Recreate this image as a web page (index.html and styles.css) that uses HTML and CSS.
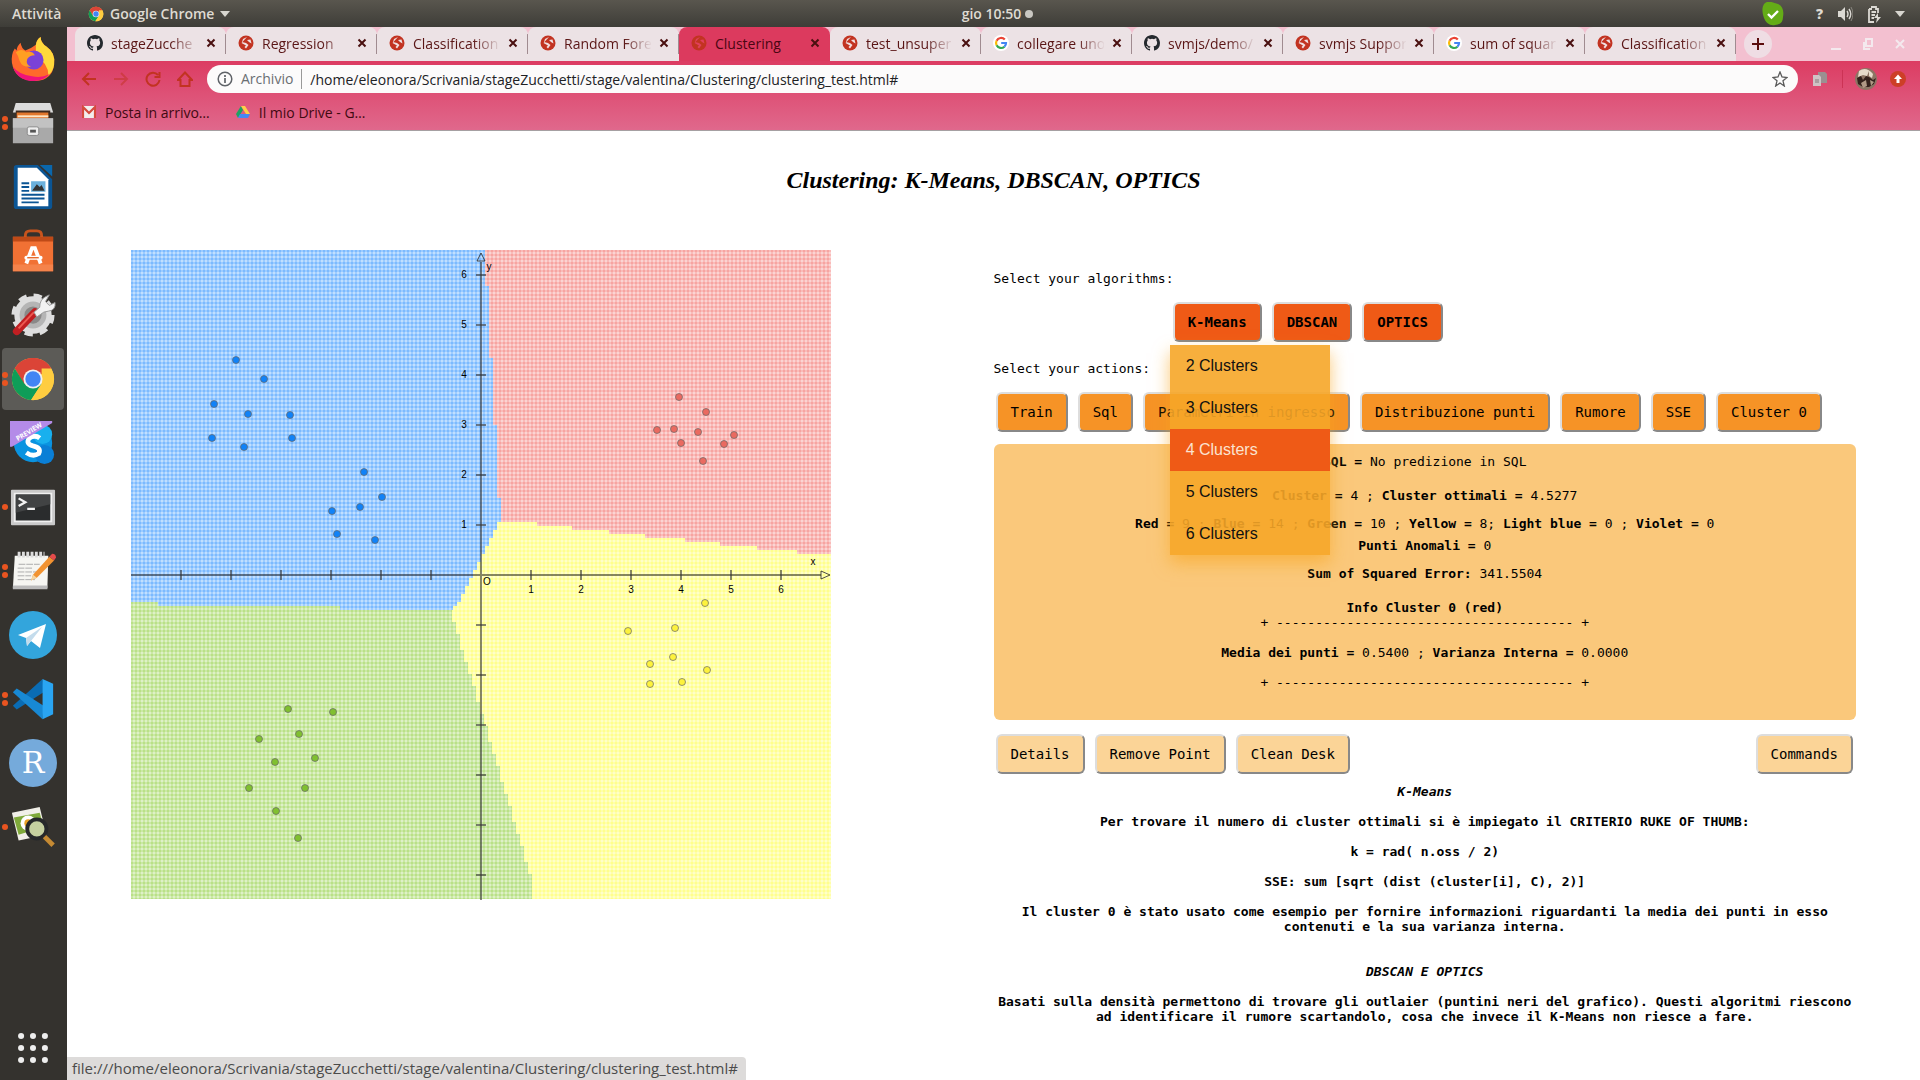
FILE: index.html
```html
<!DOCTYPE html>
<html lang="it">
<head>
<meta charset="utf-8">
<title>Clustering</title>
<link rel="stylesheet" href="styles.css">
</head>
<body>
<svg class="defs" aria-hidden="true">
  <symbol id="chrome" viewBox="0 0 48 48">
    <circle cx="24" cy="24" r="22" fill="#fc4"/>
    <path d="M24 24 5 13a22 22 0 0 1 38 0z" fill="#db4437"/>
    <path d="M24 13h19A22 22 0 0 0 5 13l10 17z" fill="#db4437"/>
    <path d="M5 13a22 22 0 0 0 17 33l11-17-18 0z" fill="#0f9d58"/>
    <path d="M43 13a22 22 0 0 1-21 33l11-17V13z" fill="#ffcd40"/>
    <circle cx="24" cy="24" r="10" fill="#f1f1f1"/><circle cx="24" cy="24" r="8" fill="#4285f4"/>
  </symbol>
  <symbol id="globe" viewBox="0 0 16 16">
    <circle cx="8" cy="8" r="7.5" fill="#c23321"/>
    <path d="M9 2 5 4 4 7l4 1 2.500 2L8 13.500 6.500 12 8 10.500 3.500 8M9 5l3.500-.5 1 4L11 7z" fill="currentColor"/>
  </symbol>
  <symbol id="github" viewBox="0 0 16 16">
    <path fill="#24292e" d="M8 0C3.580 0 0 3.580 0 8c0 3.540 2.290 6.530 5.470 7.590.4.070.55-.17.55-.38v-1.490c-2.010.37-2.530-.49-2.690-.94-.09-.23-.48-.94-.82-1.130-.28-.15-.68-.52-.01-.53.63-.01 1.080.58 1.230.82.72 1.210 1.870.87 2.330.66.07-.52.28-.87.51-1.070-1.780-.2-3.640-.89-3.640-3.950 0-.87.31-1.590.82-2.150-.08-.2-.36-1.020.08-2.120 0 0 .67-.21 2.200.82a7.600 7.600 0 0 1 4 0c1.530-1.040 2.200-.82 2.200-.82.44 1.100.16 1.920.08 2.120.51.56.82 1.270.82 2.150 0 3.070-1.870 3.750-3.650 3.950.29.25.54.73.54 1.480v2.200c0 .21.15.46.55.38A8 8 0 0 0 16 8c0-4.420-3.580-8-8-8z"/>
  </symbol>
  <symbol id="google" viewBox="0 0 16 16">
    <circle cx="8" cy="8" r="8" fill="#fff"/>
    <g fill="none" stroke-width="2.200"><path d="M11.800 4.600A5 5 0 0 0 3.600 5.700" stroke="#ea4335"/><path d="M3.600 5.700a5 5 0 0 0 0 4.600" stroke="#fbbc05"/><path d="M3.600 10.300a5 5 0 0 0 7.800 1.400" stroke="#34a853"/><path d="M11.400 11.700A5 5 0 0 0 13 8H8.200" stroke="#4285f4"/></g>
  </symbol>
  <symbol id="cross" viewBox="0 0 10 10"><path d="m1.500 1.500 7 7m0-7-7 7" stroke="currentColor" stroke-width="2"/></symbol>
</svg>

<header class="topbar">
  <span class="activities">Attività</span>
  <span class="appmenu"><svg class="i16"><use href="#chrome"/></svg>Google Chrome<svg width="10" height="6"><path d="M0 0h10L5 6z" fill="#d8d6d0"/></svg></span>
  <span class="clock">gio 10:50 <i class="notice"></i></span>
  <span class="tray">
    <svg width="22" height="24" viewBox="0 0 22 24"><path d="M5 0c4-1 7 1 11 2 5 2 6 8 5 13 0 5-3 8-8 8-5 1-9-2-11-7C0 11-1 2 5 0z" fill="#64ac17"/><path d="m6 12 3.500 3.500L16 9" fill="none" stroke="#fff" stroke-width="2.400"/></svg>
    <b class="help">?</b>
    <svg width="16" height="16" viewBox="0 0 16 16"><path d="M1 5h3l4-4v14l-4-4H1z" fill="#dbd9d3"/><path d="M10 5q2 3 0 6m2-8q3.500 5 0 10" fill="none" stroke="#dbd9d3" stroke-width="1.400"/><path d="M14 1q4 7 0 14" fill="none" stroke="#88867f"/></svg>
    <svg width="14" height="18" viewBox="0 0 14 18"><path d="M4 2h5v2h2v4M2 4v13h5M2 4h3M4.500 7H9M4.500 10H8M4.500 13H7" fill="none" stroke="#dbd9d3" stroke-width="1.800"/><path d="M11 8 7 13h3l-1 5 5-6h-3z" fill="#dbd9d3"/></svg>
    <svg width="10" height="6"><path d="M0 0h10L5 6z" fill="#d8d6d0"/></svg>
  </span>
</header>

<div class="desktop">
<nav class="dock" aria-label="Dock">
  <div class="app"><svg viewBox="0 0 48 48"><path d="M27 9q1-6 5-8 0 6 6 10 10 7 8 19-2 16-19 17Q5 47 2 28q-1-9 3-15l2 2q0-4 4-8 1 6 5 8 6-2 11-6z" fill="#ff6a2b"/><path d="M27 9q1-6 5-8 0 6 6 10 10 7 8 19-1 7-6 11 0-13-13-20z" fill="#ffd93b"/><path d="M3 32q5 15 22 15 10 0 16-7-8 4-18 2Q9 40 3 32z" fill="#f0147a"/><circle cx="25" cy="25" r="10" fill="#7a42d8"/><path d="M6 17q6-5 11 0 6-2 9 3-6 0-8 4-2 6 4 8-9 1-12-6-1-5-4-9z" fill="#ff9f22"/></svg></div>
  <div class="app run2"><svg viewBox="0 0 48 48"><path d="M6 3h36l3 10H3z" fill="#dcdcdc"/><path d="M6 11h36v11H6z" fill="#3c2a1e"/><path d="M7 13h33v8H7z" fill="#e2772c"/><path d="M8 16h32v2H8z" fill="#ffe6c4"/><path d="M3 19h42v26H3z" fill="#a9a9a9"/><path d="M3 19h42v10H3z" fill="#c2c2c2"/><rect x="18" y="28" width="12" height="9" rx="2" fill="#eee" stroke="#888"/><path d="M21 31h6v3h-6z" fill="#555"/></svg></div>
  <div class="app"><svg viewBox="0 0 48 48"><path d="M7 1h22l15 15v28q0 3-3 3H7q-3 0-3-3V4q0-3 3-3z" fill="#0b5594"/><path d="M31 1h13v12z" fill="#0a67ac"/><path d="M8 4h20l12 12v28H8z" fill="#fff"/><path d="M12 20h8M12 24h8M12 28h8M12 32h24M12 36h24M12 40h18" stroke="#0b5594" stroke-width="2"/><path d="M22 18h15v11H22z" fill="#6bb1dd"/><path d="m23 28 5-7 3 3 2-2 3 6z" fill="#333"/></svg></div>
  <div class="app"><svg viewBox="0 0 48 48"><path d="M16 13V8q0-5 5-5h7q5 0 5 5v5" fill="none" stroke="#c8541d" stroke-width="3"/><path d="M3 9h42v36H3z" fill="#f17134"/><path d="M3 9h42v5H3z" fill="#bf4a17"/><path d="M3 38h42v7H3z" fill="#f5834b"/><path d="m17 37 6-16h3l6 16" fill="none" stroke="#fff" stroke-width="4"/><path d="M17 31h15" stroke="#fff" stroke-width="4" stroke-linecap="round"/><path d="M18 31h12" stroke="#e86b2e" stroke-width="1.500"/></svg></div>
  <div class="app"><svg viewBox="0 0 48 48"><circle cx="24" cy="24" r="15" fill="none" stroke="#dedede" stroke-width="9"/><circle cx="24" cy="24" r="20" fill="none" stroke="#dedede" stroke-width="5" stroke-dasharray="8.500 7.208"/><circle cx="24" cy="24" r="14" fill="#b5b5b5"/><circle cx="24" cy="24" r="9" fill="#8a8988"/><path d="M7 41 26 21" stroke="#c01f22" stroke-width="8" stroke-linecap="round"/><path d="m9 38 16-17" stroke="#ee5a52" stroke-width="2"/><path d="m25 21 6-5q0-8 6-11l4-2-4 7 4 4 6-3q1 8-7 9-5 0-9 4l-3 2z" fill="#f2f2f2" stroke="#999"/></svg></div>
  <div class="app run2 current"><svg viewBox="0 0 48 48"><use href="#chrome"/></svg></div>
  <div class="app"><svg viewBox="0 0 48 48"><circle cx="24" cy="24" r="20" fill="#0a93e0"/><circle cx="36" cy="36" r="10" fill="#0a7fd6"/><circle cx="34" cy="15" r="10" fill="#18b0ee"/><path d="M31 19q-5-4-11 0-4 6 4 8 9 2 6 8-6 4-13-1" fill="none" stroke="#fff" stroke-width="5"/><path d="M0 1h44v2L2 28H0z" fill="#b48be8"/><text x="8" y="22" transform="rotate(-31 8 22)" class="preview">PREVIEW</text></svg></div>
  <div class="app run1"><svg viewBox="0 0 48 48"><rect x="1" y="6" width="46" height="37" rx="1" fill="#c9c9c9"/><path d="M4 9h40v31H4z" fill="#f0f0f0"/><path d="M6 11h36v27H6z" fill="#2a2c2d"/><path d="M6 11h36v10L6 30z" fill="#414344"/><path d="m9 15 7 4-7 4M18 26h8" fill="none" stroke="#f2f2f2" stroke-width="2.400"/></svg></div>
  <div class="app run2"><svg viewBox="0 0 48 48"><path d="M5 8h35l-1 34H3z" fill="#f6f6f2"/><path d="M3 39h36v4H3z" fill="#bbb"/><path d="M8 7h28" stroke="#ddd" stroke-width="6" stroke-dasharray="3 1.500"/><path d="M9 17h22M8 21h16M8 25h24M8 29h14M8 33h18" stroke="#aaa" stroke-dasharray="7 1"/><path d="m22 34 2-6L41 9l5 4-18 18z" fill="#f29331"/><path d="m41 9 3-3q4 0 4 4l-2 3z" fill="#e44b4b"/><path d="m22 34 2-6 4 3z" fill="#f5d7a4"/></svg></div>
  <div class="app big"><svg viewBox="0 0 48 48"><circle cx="24" cy="24" r="24" fill="#33a5dc"/><path d="m9 24 28-11-6 24-9-7-4 5-1-8z" fill="#fff"/><path d="m17 27 16-11-11 14-4 5z" fill="#c4dcec"/></svg></div>
  <div class="app run2"><svg viewBox="0 0 48 48"><path d="M34 3 3 31l4 4 28-18z" fill="#0a6cb4"/><path d="M34 45 3 17l4-4 28 18z" fill="#1889d4"/><path d="m34 3 11 5v32l-11 5z" fill="#2aa5f2"/></svg></div>
  <div class="app big"><svg viewBox="0 0 48 48"><circle cx="24" cy="24" r="24" fill="#75aadb"/><text x="24" y="34" text-anchor="middle" class="rletter">R</text></svg></div>
  <div class="app run1"><svg viewBox="0 0 48 48"><path d="m2 9 29-6 7 29-29 6z" fill="#f1efe8"/><path d="m4 14 27-5 4 15-26 8z" fill="#7fa93a"/><circle cx="19" cy="20" r="8" fill="#fff"/><circle cx="19" cy="20" r="4" fill="#e9a227"/><circle cx="28" cy="26" r="10" fill="#c5d0a0" stroke="#26282a" stroke-width="4"/><path d="m36 34 9 9" stroke="#c58a33" stroke-width="5"/></svg></div>
  <div class="app grid"><svg viewBox="0 0 48 48" fill="#eee"><circle cx="11" cy="11" r="3.300"/><circle cx="24" cy="11" r="3.300"/><circle cx="37" cy="11" r="3.300"/><circle cx="11" cy="24" r="3.300"/><circle cx="24" cy="24" r="3.300"/><circle cx="37" cy="24" r="3.300"/><circle cx="11" cy="37" r="3.300"/><circle cx="24" cy="37" r="3.300"/><circle cx="37" cy="37" r="3.300"/></svg></div>
</nav>

<div class="browser">
  <div class="tabs">
    <div class="tab"><svg class="i16"><use href="#github"/></svg><span>stageZucche</span><button aria-label="Chiudi"><svg><use href="#cross"/></svg></button></div>
    <div class="tab"><svg class="i16"><use href="#globe"/></svg><span>Regression</span><button aria-label="Chiudi"><svg><use href="#cross"/></svg></button></div>
    <div class="tab"><svg class="i16"><use href="#globe"/></svg><span>Classification</span><button aria-label="Chiudi"><svg><use href="#cross"/></svg></button></div>
    <div class="tab"><svg class="i16"><use href="#globe"/></svg><span>Random Fore</span><button aria-label="Chiudi"><svg><use href="#cross"/></svg></button></div>
    <div class="tab active"><svg class="i16"><use href="#globe"/></svg><span>Clustering</span><button aria-label="Chiudi"><svg><use href="#cross"/></svg></button></div>
    <div class="tab"><svg class="i16"><use href="#globe"/></svg><span>test_unsuper</span><button aria-label="Chiudi"><svg><use href="#cross"/></svg></button></div>
    <div class="tab"><svg class="i16"><use href="#google"/></svg><span>collegare uno</span><button aria-label="Chiudi"><svg><use href="#cross"/></svg></button></div>
    <div class="tab"><svg class="i16"><use href="#github"/></svg><span>svmjs/demo/</span><button aria-label="Chiudi"><svg><use href="#cross"/></svg></button></div>
    <div class="tab"><svg class="i16"><use href="#globe"/></svg><span>svmjs Suppor</span><button aria-label="Chiudi"><svg><use href="#cross"/></svg></button></div>
    <div class="tab"><svg class="i16"><use href="#google"/></svg><span>sum of squar</span><button aria-label="Chiudi"><svg><use href="#cross"/></svg></button></div>
    <div class="tab"><svg class="i16"><use href="#globe"/></svg><span>Classification</span><button aria-label="Chiudi"><svg><use href="#cross"/></svg></button></div>
    <button class="newtab" aria-label="Nuova scheda"><svg width="12" height="12"><path d="M6 0v12M0 6h12" stroke="#5a0d0d" stroke-width="2"/></svg></button>
    <div class="winctl">
      <svg width="10" height="12"><path d="M0 11h10" stroke="#f4e9ee" stroke-width="2"/></svg>
      <svg width="10" height="12"><path d="M3 1h6v7H3zM1 4v7h6" fill="none" stroke="#f4e9ee" stroke-width="2"/></svg>
      <svg width="10" height="12"><path d="m1 2 8 8m0-8-8 8" stroke="#f4e9ee" stroke-width="2"/></svg>
    </div>
  </div>
  <div class="chromebar">
    <div class="toolbar">
      <button aria-label="Indietro"><svg viewBox="0 0 16 16"><path d="M15 8H2m6-6L2 8l6 6"/></svg></button>
      <button aria-label="Avanti" class="off"><svg viewBox="0 0 16 16"><path d="M1 8h13M8 2l6 6-6 6"/></svg></button>
      <button aria-label="Ricarica"><svg viewBox="0 0 16 16"><path d="M13 4a6.500 6.500 0 1 0 1.500 5M14.500 1v5h-5"/></svg></button>
      <button aria-label="Home"><svg viewBox="0 0 16 16"><path d="M1 9 8 1.500 15 9h-2.500v6h-9V9z"/></svg></button>
      <div class="omnibox">
        <svg class="i16" viewBox="0 0 16 16"><circle cx="8" cy="8" r="6.800" fill="none" stroke="#5f6368" stroke-width="1.500"/><path d="M8 7v5M8 4v2" stroke="#5f6368" stroke-width="1.700"/></svg>
        <label for="url">Archivio</label>
        <input id="url" type="text" value="/home/eleonora/Scrivania/stageZucchetti/stage/valentina/Clustering/clustering_test.html#">
        <svg class="i16" viewBox="0 0 16 16"><path d="m8 1 2 5 5 .5-4 3.300L12.300 15 8 12l-4.300 3L5 9.800 1 6.500 6 6z" fill="none" stroke="#5a5a5a" stroke-width="1.300"/></svg>
      </div>
      <svg class="ext" viewBox="0 0 16 16"><path d="M6 1h7l2 2v9H6z" fill="#9b8f91"/><path d="M1 4h6l2 2v9H1z" fill="#cfc3c5"/><path d="M3 8h4v4H3z" fill="#aa9ea0"/></svg>
      <span class="sep"></span>
      <svg class="avatar" viewBox="0 0 22 22"><circle cx="11" cy="11" r="11" fill="#8c7564"/><path d="M4 3q7-5 14 3l-1 4-3-2V3l-2 5-4-1-5 2z" fill="#e6dccb"/><path d="M2 10l4-2 2 4 3-4 3 1 4 3 3-2-2 6-5 3-6 0-5-3z" fill="#33221c"/><path d="M6 15l5-3 1 6-4 2zM15 12l4 2-3 4z" fill="#b09a86"/></svg>
      <svg class="update" viewBox="0 0 16 16"><circle cx="8" cy="8" r="8" fill="#cd3f27"/><path d="M8 3.500 12 8H9.500v4h-3V8H4z" fill="#fff"/></svg>
    </div>
    <div class="bookmarks">
      <a href="#"><svg viewBox="0 0 14 14"><path d="M0 1h14v12H0z" fill="#f3eeee"/><path d="M1 13V2l6 6 6-6v11" fill="none" stroke="#d54a3d" stroke-width="2.200"/></svg>Posta in arrivo…</a>
      <a href="#"><svg viewBox="0 0 14 14"><path d="M5 1 0 9l2 4 5-8z" fill="#1da362"/><path d="M5 1h4l5 8h-4z" fill="#ffcf48"/><path d="m4 9-2 4h10l2-4z" fill="#4688f4"/></svg>Il mio Drive - G…</a>
    </div>
  </div>

  <main class="page">
    <h1>Clustering: K-Means, DBSCAN, OPTICS</h1>
    <div class="columns">
      <section class="plot">
        <svg class="chart" width="700" height="650" viewBox="0 0 700 650" role="img" aria-label="Cluster">
          <defs>
            <pattern id="weave" width="4" height="4" patternUnits="userSpaceOnUse">
              <path d="M0 0h2v2H0z" fill="#fff" fill-opacity=".45"/><path d="M2 0h2v2H2zM0 2h2v2H0z" fill="#fff" fill-opacity=".59"/><path d="M2 2h2v2H2z" fill="#fff" fill-opacity=".74"/>
            </pattern>
            <clipPath id="area"><path d="M0 0h700v649H0z"/></clipPath>
          </defs>
          <g shape-rendering="crispEdges" clip-path="url(#area)">
            <path d="M0 0h700v650H0z" fill="#ffff30"/>
            <path d="M354 0H700V304H666V300H626V296H589V292H554V288H514V284H478V280H441V276H406V272H370V248H366V175H362V108H358V36H354z" fill="#f05a54"/>
            <path d="M0 0H354V36H358V108H362V175H366V248H370V272h-4v8h-4v8h-4v8h-4v8h-4v8h-4v8h-4v8h-4v8h-4v8h-4v8h-4v4h-4v4H209V356H27V352H0z" fill="#1082ff"/>
            <path d="M0 352H27V356H209V360H321v12h4v12h4v16h4v12h4v12h4v12h4v16h4v12h4v12h4v16h4v12h4v12h4v16h4v12h4v12h4v16h4v12h4v12h4v16h4v12h4v32h-405z" fill="#80c825"/>
            <path d="M0 0h700v650H0z" fill="url(#weave)"/>
          </g>
          <g class="axes">
            <path d="M0 325h690M350 12v638"/>
            <path d="M50 320v10M100 320v10M150 320v10M200 320v10M250 320v10M300 320v10M400 320v10M450 320v10M500 320v10M550 320v10M600 320v10M650 320v10"/>
            <path d="M345 25h10M345 75h10M345 125h10M345 175h10M345 225h10M345 275h10M345 375h10M345 425h10M345 475h10M345 525h10M345 575h10M345 625h10"/>
            <path class="tip" d="m346 11 4-8 4 8zM690 321l9 4-9 4z"/>
          </g>
          <g class="labels">
            <text x="333" y="28">6</text><text x="333" y="78">5</text><text x="333" y="128">4</text><text x="333" y="178">3</text><text x="333" y="228">2</text><text x="333" y="278">1</text>
            <text x="400" y="343">1</text><text x="450" y="343">2</text><text x="500" y="343">3</text><text x="550" y="343">4</text><text x="600" y="343">5</text><text x="650" y="343">6</text>
            <text x="358" y="20">y</text><text x="682" y="315">x</text><text x="356" y="335">O</text>
          </g>
          <g class="dots" fill="#1082f8"><circle cx="105" cy="110" r="3.500"/><circle cx="133" cy="129" r="3.500"/><circle cx="83" cy="154" r="3.500"/><circle cx="117" cy="164" r="3.500"/><circle cx="159" cy="165" r="3.500"/><circle cx="81" cy="188" r="3.500"/><circle cx="161" cy="188" r="3.500"/><circle cx="113" cy="197" r="3.500"/><circle cx="233" cy="222" r="3.500"/><circle cx="251" cy="247" r="3.500"/><circle cx="229" cy="257" r="3.500"/><circle cx="201" cy="261" r="3.500"/><circle cx="206" cy="284" r="3.500"/><circle cx="244" cy="290" r="3.500"/></g>
          <g class="dots" fill="#ea6a60"><circle cx="548" cy="147" r="3.500"/><circle cx="575" cy="162" r="3.500"/><circle cx="543" cy="179" r="3.500"/><circle cx="526" cy="180" r="3.500"/><circle cx="567" cy="182" r="3.500"/><circle cx="550" cy="193" r="3.500"/><circle cx="603" cy="185" r="3.500"/><circle cx="593" cy="194" r="3.500"/><circle cx="572" cy="211" r="3.500"/></g>
          <g class="dots" fill="#fdf23c"><circle cx="574" cy="353" r="3.500"/><circle cx="497" cy="381" r="3.500"/><circle cx="544" cy="378" r="3.500"/><circle cx="542" cy="407" r="3.500"/><circle cx="519" cy="414" r="3.500"/><circle cx="576" cy="420" r="3.500"/><circle cx="519" cy="434" r="3.500"/><circle cx="551" cy="432" r="3.500"/></g>
          <g class="dots" fill="#80c030"><circle cx="157" cy="459" r="3.500"/><circle cx="202" cy="462" r="3.500"/><circle cx="168" cy="484" r="3.500"/><circle cx="128" cy="489" r="3.500"/><circle cx="144" cy="512" r="3.500"/><circle cx="184" cy="508" r="3.500"/><circle cx="118" cy="538" r="3.500"/><circle cx="174" cy="538" r="3.500"/><circle cx="145" cy="561" r="3.500"/><circle cx="167" cy="588" r="3.500"/></g>
        </svg>
      </section>

      <section class="controls">
        <p class="hint">Select your algorithms:</p>
        <div class="row algorithms">
          <div class="dropdown">
            <button class="btn strong">K-Means</button>
            <div class="menu">
              <a href="#">2 Clusters</a><a href="#">3 Clusters</a><a href="#" class="selected">4 Clusters</a><a href="#">5 Clusters</a><a href="#">6 Clusters</a>
            </div>
          </div>
          <button class="btn strong">DBSCAN</button>
          <button class="btn strong">OPTICS</button>
        </div>
        <p class="hint second">Select your actions:</p>
        <div class="row">
          <button class="btn mid">Train</button>
          <button class="btn mid">Sql</button>
          <button class="btn mid">Parametri in ingresso</button>
          <button class="btn mid">Distribuzione punti</button>
          <button class="btn mid">Rumore</button>
          <button class="btn mid">SSE</button>
          <button class="btn mid">Cluster 0</button>
        </div>
        <div class="info">
          <p><b>SQL =</b> No predizione in SQL</p>
          <p class="gap-l"><b>Cluster =</b> 4 ; <b>Cluster ottimali =</b> 4.5277</p>
          <p class="gap-m"><b>Red =</b> 9 ; <b>Blue =</b> 14 ; <b>Green =</b> 10 ; <b>Yellow =</b> 8; <b>Light blue =</b> 0 ; <b>Violet =</b> 0</p>
          <p class="gap-s"><b>Punti Anomali =</b> 0</p>
          <p class="gap-m"><b>Sum of Squared Error:</b> 341.5504</p>
          <p class="gap-l"><b>Info Cluster 0 (red)</b></p>
          <p>+ -------------------------------------- +</p>
          <p class="gap-line"><b>Media dei punti =</b> 0.5400 ; <b>Varianza Interna =</b> 0.0000</p>
          <p class="gap-line">+ -------------------------------------- +</p>
        </div>
        <div class="row tools">
          <button class="btn soft">Details</button>
          <button class="btn soft">Remove Point</button>
          <button class="btn soft">Clean Desk</button>
          <button class="btn soft last">Commands</button>
        </div>
        <div class="notes">
          <h2>K-Means</h2>
          <p>Per trovare il numero di cluster ottimali si è impiegato il CRITERIO RUKE OF THUMB:</p>
          <p>k = rad( n.oss / 2)</p>
          <p>SSE: sum [sqrt (dist (cluster[i], C), 2)]</p>
          <p>Il cluster 0 è stato usato come esempio per fornire informazioni riguardanti la media dei punti in esso contenuti e la sua varianza interna.</p>
          <h2 class="next">DBSCAN E OPTICS</h2>
          <p>Basati sulla densità permettono di trovare gli outlaier (puntini neri del grafico). Questi algoritmi riescono ad identificare il rumore scartandolo, cosa che invece il K-Means non riesce a fare.</p>
        </div>
      </section>
    </div>
    <div class="status">file:///home/eleonora/Scrivania/stageZucchetti/stage/valentina/Clustering/clustering_test.html#</div>
  </main>
</div>
</div>
</body>
</html>
```
FILE: styles.css
```css
* { box-sizing: border-box; }
html, body { height: 100%; }
body { margin: 0; display: flex; flex-direction: column; overflow: hidden; font-family: "Open Sans", "Noto Sans", sans-serif; font-size: 14px; background: #fff; }
button { font: inherit; padding: 0; border: 0; background: none; color: inherit; cursor: pointer; }
p, h1, h2 { margin: 0; }
.defs { position: absolute; width: 0; height: 0; }
.i16 { width: 16px; height: 16px; flex: none; }

.topbar { flex: none; height: 27px; display: grid; grid-template-columns: 1fr auto 1fr; align-items: center; padding: 0 15px 0 12px; background: linear-gradient(#59564e, #3e3d38); color: #dfdbd2; font-weight: 600; line-height: 20px; }
.activities { grid-area: 1 / 1; }
.appmenu { grid-area: 1 / 1; display: flex; align-items: center; gap: 6px; margin-left: 76px; }
.clock { grid-area: 1 / 2; display: flex; align-items: center; gap: 4px; padding-left: 78px; }
.notice { width: 8px; height: 8px; border-radius: 50%; background: #c9c7c1; }
.tray { grid-area: 1 / 3; justify-self: end; display: flex; align-items: center; gap: 14px; }
.help { margin-left: 18px; }

.desktop { flex: 1; min-height: 0; display: flex; }
.dock { flex: none; width: 67px; background: #34322e; display: flex; flex-direction: column; }
.app { position: relative; width: 66px; height: 64px; display: flex; align-items: center; justify-content: center; }
.app svg { width: 46px; height: 46px; overflow: visible; }
.big svg { width: 48px; height: 48px; }
.current::after { content: ""; position: absolute; inset: 1px 2px; border-radius: 4px; background: rgba(255,255,255,.2); z-index: 0; }
.current svg { position: relative; z-index: 1; }
.run1::before, .run2::before { content: ""; position: absolute; z-index: 1; left: 2px; top: 29px; width: 6px; height: 6px; border-radius: 50%; background: #e95420; }
.run2::before { top: 25px; box-shadow: 0 8px #e95420; }
.grid { margin-top: auto; }
.grid svg { width: 44px; height: 44px; }
.preview { font: bold 7px "Open Sans", sans-serif; fill: #fff; }
.rletter { font: 30px "DejaVu Serif", serif; fill: #fff; }

.browser { flex: 1; min-width: 0; display: flex; flex-direction: column; }
.tabs { flex: none; height: 34px; display: flex; align-items: center; padding-left: 8px; background: #f3c0d0; color: #5a1515; }
.tab { flex: 0 1 151px; min-width: 0; height: 34px; display: flex; align-items: center; padding: 0 10px 2px 12px; border-radius: 8px 8px 0 0; background: linear-gradient(#a08b90, #a08b90) right center / 1px 20px no-repeat #ece2e5; }
.tab .i16 { color: #f0dfe0; }
.tab span { flex: 1; min-width: 0; margin: 0 8px; overflow: hidden; white-space: nowrap; -webkit-mask-image: linear-gradient(90deg, #000 60px, transparent 88px); mask-image: linear-gradient(90deg, #000 60px, transparent 88px); }
.tab button { display: flex; color: #4a1010; }
.tab button svg { width: 10px; height: 10px; }
.tab.active { background: #dc3a5e; color: #4a0612; }
.tab.active .i16 { color: #e0405c; }
.tab.active span { -webkit-mask-image: none; mask-image: none; }
.newtab { flex: none; width: 28px; height: 28px; margin-left: 8px; border-radius: 50%; background: #efdde4; display: flex; align-items: center; justify-content: center; }
.winctl { margin-left: auto; padding-right: 15px; display: flex; gap: 22px; }

.chromebar { flex: none; height: 70px; background: linear-gradient(#dc3c62, #e0688c); border-bottom: 1px solid #a6a0a2; }
.toolbar { height: 36px; display: flex; align-items: center; padding: 0 14px; }
.toolbar button { width: 16px; height: 16px; margin-right: 16px; }
.toolbar button svg { display: block; width: 16px; height: 16px; fill: none; stroke: #c23321; stroke-width: 2; }
.toolbar .off { opacity: .5; }
.toolbar button:nth-of-type(4) { margin-right: 14px; }
.omnibox { flex: 1; height: 28px; border-radius: 14px; background: #fcfbfb; display: flex; align-items: center; padding: 0 10px; }
.omnibox label { margin-left: 8px; padding-right: 8px; border-right: 1px solid #999; line-height: 20px; color: #6a6e72; }
.omnibox input { flex: 1; min-width: 0; border: 0; padding: 0 0 0 8px; background: none; font: inherit; color: #202124; outline: 0; }
.ext { width: 16px; height: 16px; margin-left: 14px; }
.sep { width: 1px; height: 18px; margin: 0 12px 0 14px; background: #cc3355; }
.avatar { width: 22px; height: 22px; margin-right: 13px; }
.update { width: 16px; height: 16px; }
.bookmarks { display: flex; align-items: center; gap: 26px; height: 30px; padding-left: 15px; }
.bookmarks a { display: flex; align-items: center; gap: 9px; color: #3f0a12; text-decoration: none; }
.bookmarks svg { width: 14px; height: 14px; }

.page { flex: 1; min-height: 0; position: relative; padding: 35px 64px 0; overflow: hidden; color: #000; }
h1 { font: italic bold 24px/28px "Liberation Serif", serif; text-align: center; }
.columns { display: grid; grid-template-columns: 1fr 1fr; margin-top: 56px; }
.chart { display: block; }
.axes { fill: none; stroke: #333; stroke-opacity: .6; stroke-width: 2; }
.axes .tip { stroke: #222; stroke-opacity: .8; stroke-width: 1; }
.labels { font: 10px "Liberation Sans", sans-serif; text-anchor: middle; }
.dots { stroke: #666; stroke-opacity: .7; }

.controls { padding-top: 21px; font: 13px/15px "DejaVu Sans Mono", monospace; }
.row { display: flex; gap: 10px; padding: 0 3px 0 2px; }
.algorithms { justify-content: center; margin-top: 16px; padding-right: 236px; }
.hint.second { margin: 19px 0 16px; }
.btn { height: 40px; padding: 0 13px; border: 2px solid; border-color: #ddd #888 #888 #ddd; border-radius: 6px; font-size: 14px; color: #000; white-space: nowrap; }
.strong { background: #ef5a16; font-weight: bold; }
.mid { background: #f69326; }
.soft { background: #fbd497; }
.dropdown { position: relative; }
.menu { position: absolute; z-index: 2; left: -3px; top: 43px; width: 160px; background: rgba(246,166,40,.9); box-shadow: 0 8px 16px rgba(248,165,30,.6); }
.menu a { display: block; padding: 12px 16px; font: 16px/18px "Liberation Sans", sans-serif; color: #111; text-decoration: none; }
.menu .selected { background: #ef5a16; color: #fbe3d0; }
.info { margin-top: 12px; padding: 10px 0 30px; border-radius: 6px; background: #fac87b; text-align: center; }
.gap-s { margin-top: 7px; }
.gap-m { margin-top: 13px; }
.gap-l { margin-top: 19px; }
.gap-line { margin-top: 15px; }
.tools { margin-top: 14px; }
.last { margin-left: auto; }
.notes { margin-top: 10px; display: grid; gap: 15px; text-align: center; font-weight: bold; }
.notes h2 { font: inherit; font-style: italic; }
.notes .next { margin-top: 15px; }
.status { position: absolute; left: 0; bottom: 0; padding: 0 8px 0 5px; height: 23px; font-size: 15px; line-height: 22px; border-radius: 0 4px 0 0; background: #dddbda; color: #4b4b4b; white-space: nowrap; }
```
